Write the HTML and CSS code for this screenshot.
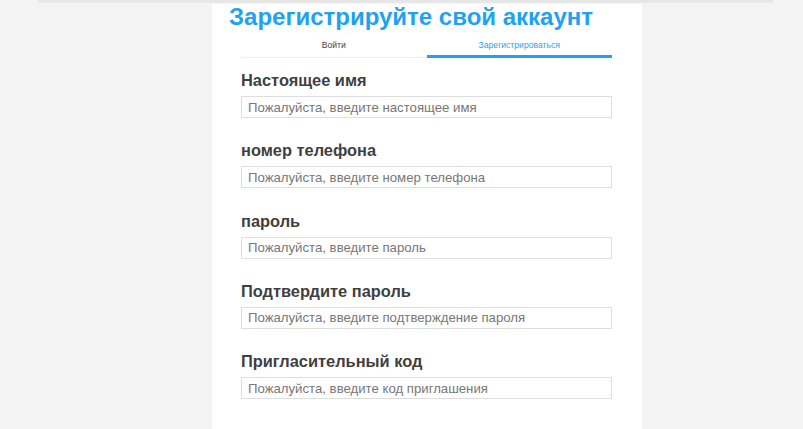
FILE: index.html
```html
<!DOCTYPE html>
<html>
<head>
<meta charset="utf-8">
<title>Регистрация</title>
<link rel="stylesheet" href="styles.css">
</head>
<body>
<div class="topbar"></div>
<div class="card">
  <h1 class="title">Зарегистрируйте свой аккаунт</h1>
  <div class="tabs">
    <a class="tab" href="#">Войти</a>
    <a class="tab active" href="#">Зарегистрироваться</a>
  </div>
  <form class="form">
    <div class="group">
      <label for="name">Настоящее имя</label>
      <input type="text" id="name" placeholder="Пожалуйста, введите настоящее имя">
    </div>
    <div class="group">
      <label for="phone">номер телефона</label>
      <input type="text" id="phone" placeholder="Пожалуйста, введите номер телефона">
    </div>
    <div class="group">
      <label for="password">пароль</label>
      <input type="password" id="password" placeholder="Пожалуйста, введите пароль">
    </div>
    <div class="group">
      <label for="confirm">Подтвердите пароль</label>
      <input type="password" id="confirm" placeholder="Пожалуйста, введите подтверждение пароля">
    </div>
    <div class="group">
      <label for="invite">Пригласительный код</label>
      <input type="text" id="invite" placeholder="Пожалуйста, введите код приглашения">
    </div>
  </form>
</div>
</body>
</html>
```

FILE: styles.css
```css
html, body {
  height: 100%;
}

body {
  margin: 0;
  background-color: #f3f3f3;
  font-family: "Liberation Sans", Arial, Helvetica, sans-serif;
  overflow: hidden;
}

/* thin strip left from the header */
.topbar {
  height: 2px;
  margin: 0 30px 0 38px;
  background-color: #e6e6e6;
  box-shadow: 0 1px 1px rgba(0,0,0,0.04);
}

.card {
  width: 430px;
  min-height: 100%;
  margin: 2px 0 0 212px;
  padding: 0 30px 0 29px;
  box-sizing: border-box;
  background-color: #fff;
}

.title {
  margin: 0 0 0 -12px;
  padding-top: 1px;
  font-size: 24px;
  line-height: 24px;
  font-weight: bold;
  color: #1ea2f1;
}

/* tabs */
.tabs {
  display: flex;
  margin-top: 5px;
  border-bottom: 1px solid #eee;
}

.tab {
  flex: 1;
  text-align: center;
  padding: 6px 0 6px 0;
  font-size: 8.6px;
  line-height: 11px;
  color: #444;
  text-decoration: none;
}

.tab.active {
  color: #2fa3ef;
  border-bottom: 3px solid #1ea2f1;
  margin-bottom: -1px;
  padding-bottom: 4px;
}

/* form fields */
.form {
  padding-top: 12px;
}

.group {
  margin-bottom: 22.25px;
}

.group label {
  display: block;
  font-size: 16.4px;
  line-height: 20px;
  font-weight: bold;
  color: #3f3f3f;
  margin-bottom: 6px;
}

.group input {
  display: block;
  width: 100%;
  height: 22px;
  margin: 0;
  padding: 0 6px;
  box-sizing: border-box;
  border: 1px solid #dedede;
  font-family: "Liberation Sans", Arial, sans-serif;
  font-size: 13.2px;
  color: #333;
  outline: none;
}

.group input::placeholder {
  color: #777;
}
```
